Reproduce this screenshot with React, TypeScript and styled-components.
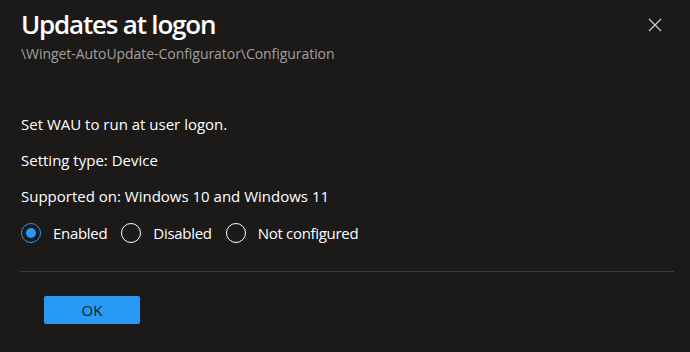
import React, { FC, useState } from 'react'
import styled, { createGlobalStyle } from 'styled-components'

const GlobalStyle = createGlobalStyle`
  html, body {
    margin: 0;
    padding: 0;
    background: #1b1a19;
  }
  body {
    font-family: 'Open Sans', 'Noto Sans', sans-serif;
    color: #ffffff;
  }
`

const Dialog = styled.div`
  width: 690px;
  height: 352px;
  box-sizing: border-box;
  background: #1b1a19;
  display: flex;
  flex-direction: column;
`

const Header = styled.div`
  display: flex;
  justify-content: space-between;
  align-items: flex-start;
  padding: 7px 24px 0 21px;
`

const TitleBlock = styled.div`
  display: flex;
  flex-direction: column;
`

const Title = styled.h1`
  margin: 0;
  font-size: 26px;
  line-height: 34px;
  font-weight: 600;
  letter-spacing: -1.2px;
`

const Breadcrumb = styled.div`
  margin-top: 3px;
  font-size: 14px;
  line-height: 20px;
  color: #a19f9d;
  letter-spacing: -0.05px;
`

const CloseButton = styled.button`
  background: none;
  border: none;
  padding: 0;
  margin-top: 7px;
  width: 22px;
  height: 22px;
  display: flex;
  align-items: center;
  justify-content: center;
  cursor: pointer;
  color: #d2d0ce;
`

const Body = styled.div`
  padding: 50px 21px 0 21px;
  display: flex;
  flex-direction: column;
`

const Text = styled.p`
  margin: 0 0 16px 0;
  font-size: 15px;
  line-height: 20px;
`

const RadioGroup = styled.div`
  display: flex;
  align-items: center;
  gap: 14px;
  margin-top: 1px;
`

const RadioItem = styled.label`
  display: flex;
  align-items: center;
  gap: 12px;
  cursor: pointer;
  font-size: 15px;
  line-height: 20px;
  letter-spacing: -0.3px;
`

const Circle = styled.span<{ $checked: boolean }>`
  box-sizing: border-box;
  width: 20px;
  height: 20px;
  border-radius: 50%;
  border: 1px solid ${({ $checked }) => ($checked ? '#2899f5' : '#ffffff')};
  display: flex;
  align-items: center;
  justify-content: center;

  &:after {
    content: '';
    width: 10px;
    height: 10px;
    border-radius: 50%;
    background: #2899f5;
    display: ${({ $checked }) => ($checked ? 'block' : 'none')};
  }
`

const Divider = styled.hr`
  border: none;
  border-top: 1px solid #3b3a39;
  margin: 28px 16px 0 20px;
`

const Footer = styled.div`
  padding: 24px 0 0 44px;
`

const PrimaryButton = styled.button`
  width: 96px;
  height: 28px;
  background: #2899f5;
  border: none;
  border-radius: 2px;
  color: #1b1a19;
  font-family: 'Open Sans', 'Noto Sans', sans-serif;
  font-size: 15px;
  cursor: pointer;
`

type Mode = 'enabled' | 'disabled' | 'notConfigured'

const options: { value: Mode; label: string }[] = [
  { value: 'enabled', label: 'Enabled' },
  { value: 'disabled', label: 'Disabled' },
  { value: 'notConfigured', label: 'Not configured' },
]

const App: FC = () => {
  const [mode, setMode] = useState<Mode>('enabled')

  return (
    <>
      <GlobalStyle />
      <Dialog>
        <Header>
          <TitleBlock>
            <Title>Updates at logon</Title>
            <Breadcrumb>\Winget-AutoUpdate-Configurator\Configuration</Breadcrumb>
          </TitleBlock>
          <CloseButton aria-label="Close">
            <svg width="14" height="14" viewBox="0 0 14 14">
              <path d="M1 1 L13 13 M13 1 L1 13" stroke="currentColor" strokeWidth="1.2" />
            </svg>
          </CloseButton>
        </Header>
        <Body>
          <Text>Set WAU to run at user logon.</Text>
          <Text>Setting type: Device</Text>
          <Text>Supported on: Windows 10 and Windows 11</Text>
          <RadioGroup role="radiogroup">
            {options.map((o) => (
              <RadioItem key={o.value} onClick={() => setMode(o.value)}>
                <Circle $checked={mode === o.value} />
                {o.label}
              </RadioItem>
            ))}
          </RadioGroup>
        </Body>
        <Divider />
        <Footer>
          <PrimaryButton>OK</PrimaryButton>
        </Footer>
      </Dialog>
    </>
  )
}

export default App
